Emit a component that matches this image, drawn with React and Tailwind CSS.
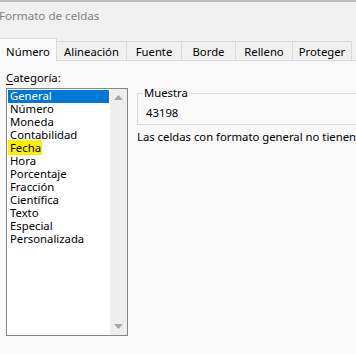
const tabs = ['Número', 'Alineación', 'Fuente', 'Borde', 'Relleno', 'Proteger'];
const tabWidths = ['w-[57px]', 'w-[70px]', 'w-[55px]', 'w-[54px]', 'w-[57px]', 'w-[59px]'];

const categorias = [
  'General',
  'Número',
  'Moneda',
  'Contabilidad',
  'Fecha',
  'Hora',
  'Porcentaje',
  'Fracción',
  'Científica',
  'Texto',
  'Especial',
  'Personalizada',
];

export default function App() {
  return (
    <div
      className="w-[356px] h-[354px] bg-[#f0f0f0] border-t-2 border-[#bdbdbd] overflow-hidden flex flex-col text-[11.3px] text-black"
      style={{ fontFamily: '"Segoe UI", "Noto Sans", sans-serif' }}
    >
      {/* Titulo */}
      <div className="h-[37px] pt-[5px] -ml-[1px] text-[11.6px] leading-[18px] text-[#808080]">
        Formato de celdas
      </div>

      {/* Pestañas */}
      <div className="flex items-end h-[22px] border-b border-[#dadada]">
        {tabs.map((t, i) => (
          <div
            key={t}
            className={
              i === 0
                ? `${tabWidths[i]} h-[23px] -mb-[1px] bg-[#f9f9f9] border-t border-r border-[#dadada] flex items-center justify-center pt-[3px] leading-[14px]`
                : `${tabWidths[i]} h-[19px] bg-[#f0f0f0] border-t border-r border-[#dadada] flex items-center justify-center pt-[2px] leading-[14px]`
            }
          >
            {t}
          </div>
        ))}
      </div>

      {/* Contenido */}
      <div className="flex-1 bg-[#f9f9f9] flex">
        <div className="pl-[6px] pt-[9px] w-[128px] shrink-0">
          <div className="leading-[16px]">
            <span className="underline underline-offset-2">C</span>ategoría:
          </div>
          <div className="mt-[2px] h-[248px] border border-[#828790] bg-white flex">
            <div className="flex-1 p-[1px] leading-[11px]">
              {categorias.map((c, i) => (
                <div key={c} className={i === 0 ? 'h-[13px] bg-[#0078d7] text-white pl-[2px]' : 'h-[13px] pl-[2px]'}>
                  {c === 'Fecha' ? <span className="bg-[#fff000] -ml-[2px] pl-[2px] pr-[1px]">{c}</span> : c}
                </div>
              ))}
            </div>
            <div className="w-[17px] bg-[#eeeeee] flex flex-col justify-between items-center py-[6px]">
              <svg width="9" height="5" viewBox="0 0 9 5"><path d="M0 5 L4.5 0 L9 5 Z" fill="#a6a6a6" /></svg>
              <svg width="9" height="5" viewBox="0 0 9 5"><path d="M0 0 L4.5 5 L9 0 Z" fill="#a6a6a6" /></svg>
            </div>
          </div>
        </div>

        <div className="ml-[9px] pt-[24px] flex-1 min-w-0">
          <fieldset className="border border-[#dcdcdc] w-[260px] pb-[3px]">
            <legend className="ml-[5px] px-[1px] leading-[16px]">Muestra</legend>
            <div className="pl-[8px] pt-[4px] leading-[16px]">43198</div>
          </fieldset>
          <div className="mt-[4px] leading-[16px] whitespace-nowrap">
            Las celdas con formato general no tienen u
          </div>
        </div>
      </div>
    </div>
  );
}
